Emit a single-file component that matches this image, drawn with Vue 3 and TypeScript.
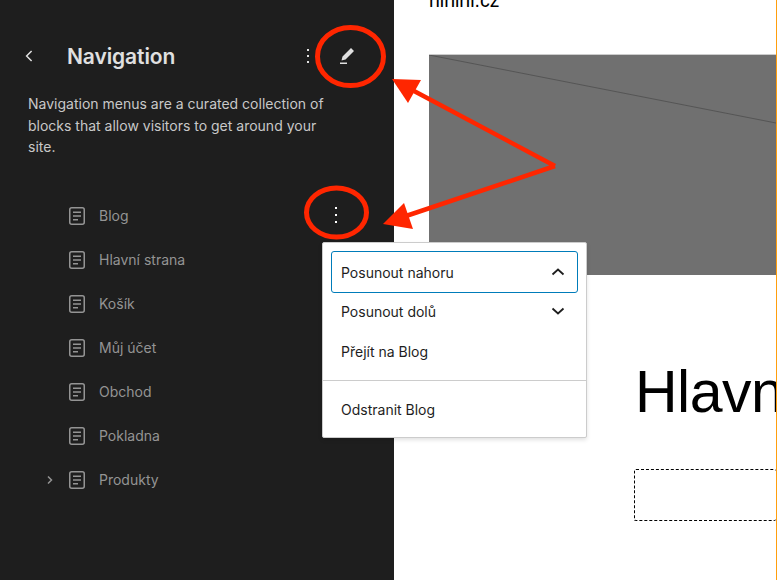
<script setup lang="ts">
const pages: { name: string; expand?: boolean; active?: boolean }[] = [
  { name: 'Blog', active: true },
  { name: 'Hlavní strana' },
  { name: 'Košík' },
  { name: 'Můj účet' },
  { name: 'Obchod' },
  { name: 'Pokladna' },
  { name: 'Produkty', expand: true },
]
</script>

<template>
  <div class="page">
    <aside class="sidebar">
      <header class="head">
        <svg class="back" width="24" height="24" viewBox="0 0 24 24"><path d="M14.600 7l-5 5 5 5" fill="none" stroke="#e0e0e0" stroke-width="1.500"/></svg>
        <h1>Navigation</h1>
        <svg class="dots" width="24" height="24" viewBox="0 0 24 24" fill="#e0e0e0"><rect x="11" y="5" width="2" height="2"/><rect x="11" y="11" width="2" height="2"/><rect x="11" y="17" width="2" height="2"/></svg>
        <svg class="pen" width="24" height="24" viewBox="0 0 24 24"><path d="m19 7-3-3-8.500 8.500-1 4 4-1L19 7Zm-7 11.500H5V20h7v-1.500Z" fill="#e0e0e0"/></svg>
      </header>
      <p class="desc">Navigation menus are a curated collection of blocks that allow visitors to get around your site.</p>
      <ul class="list">
        <li v-for="p in pages" :key="p.name" class="row">
          <span class="caret">
            <svg v-if="p.expand" width="16" height="16" viewBox="0 0 16 16"><path d="M6 4.500 9.500 8 6 11.500" fill="none" stroke="#949494" stroke-width="1.500"/></svg>
          </span>
          <svg class="doc" width="24" height="24" viewBox="0 0 24 24" fill="none" stroke="#949494"><rect x="4.750" y="3.750" width="14.500" height="16.500" rx="2" stroke-width="1.500"/><path d="M8 8.250h8M8 12h8M8 15.750h5" stroke-width="1.500"/></svg>
          <span class="label">{{ p.name }}</span>
          <svg v-if="p.active" class="row-dots" width="24" height="24" viewBox="0 0 24 24" fill="#fff"><rect x="11" y="4" width="2" height="2"/><rect x="11" y="11" width="2" height="2"/><rect x="11" y="18" width="2" height="2"/></svg>
        </li>
      </ul>
    </aside>

    <main class="canvas">
      <div class="site">hlhlhl.cz</div>
      <div class="placeholder">
        <svg class="diag" viewBox="0 0 347 220" preserveAspectRatio="none"><path d="M0 0 347 68" stroke="#555" stroke-width="1" fill="none"/></svg>
      </div>
      <h2 class="title">Hlavní strana</h2>
      <div class="dashed"></div>
    </main>

    <div class="menu">
      <div class="group">
        <div class="item focus"><span>Posunout nahoru</span>
          <svg width="24" height="24" viewBox="0 0 24 24"><path d="M6.500 14.500 12 9.500l5.500 5" fill="none" stroke="#1e1e1e" stroke-width="1.800"/></svg>
        </div>
        <div class="item"><span>Posunout dolů</span>
          <svg width="24" height="24" viewBox="0 0 24 24"><path d="M6.500 9.500 12 14.500l5.500-5" fill="none" stroke="#1e1e1e" stroke-width="1.800"/></svg>
        </div>
        <div class="item"><span>Přejít na Blog</span></div>
      </div>
      <div class="group last">
        <div class="item"><span>Odstranit Blog</span></div>
      </div>
    </div>

    <svg class="notes" width="777" height="580" viewBox="0 0 777 580">
      <ellipse cx="350.500" cy="56.500" rx="33" ry="29" fill="none" stroke="#ff2600" stroke-width="5"/>
      <ellipse cx="336.500" cy="212.500" rx="30" ry="24.500" fill="none" stroke="#ff2600" stroke-width="5"/>
      <path d="M555 166 414 91M555 166 403 217" fill="none" stroke="#ff2600" stroke-width="4.500"/>
      <path d="M392 79 421 80 408 103z" fill="#ff2600"/>
      <path d="M383 224 404 203 413 229z" fill="#ff2600"/>
    </svg>
  </div>
</template>

<style>
html, body { margin: 0; background: #fff; }
</style>

<style scoped>
.page {
  position: relative;
  width: 777px;
  height: 580px;
  display: flex;
  overflow: hidden;
  font-family: Inter, "Noto Sans", sans-serif;
  box-sizing: border-box;
  border-right: 1px solid #ff9e0d;
}
.sidebar {
  width: 394px;
  flex: none;
  background: #1e1e1e;
  box-sizing: border-box;
  padding-top: 45px;
}
.head {
  display: flex;
  align-items: center;
  height: 24px;
  padding-left: 17px;
}
.back, .dots, .pen { margin-top: -2px; }
.head h1 {
  margin: 0 0 0 26px;
  width: 229px;
  font-size: 21px;
  line-height: 24px;
  font-weight: 600;
  color: #e0e0e0;
  letter-spacing: -0.1px;
}
.pen { margin-left: 15px; }
.desc {
  margin: 24px 0 0 28px;
  width: 310px;
  font-size: 14px;
  line-height: 21.500px;
  color: #c8c8c8;
}
.list {
  list-style: none;
  margin: 36px 0 0;
  padding: 0;
}
.row {
  display: flex;
  align-items: center;
  height: 44px;
  padding-left: 42px;
  position: relative;
}
.caret { width: 16px; height: 16px; display: block; margin-right: 7px; }
.doc { flex: none; }
.label {
  margin-left: 10px;
  font-size: 14px;
  color: #949494;
}
.row-dots { position: absolute; left: 324px; top: 9px; }
.canvas {
  flex: 1;
  min-width: 0;
  position: relative;
  overflow: hidden;
}
.site {
  margin-left: 35px;
  height: 54px;
  margin-top: -9px;
  font-size: 19.500px;
  line-height: 18px;
  color: #000;
  font-family: "Liberation Sans", sans-serif;
}
.placeholder {
  margin: 9px 0 0 35px;
  height: 221px;
  background: #707070;
  border-top: 1px solid #ccc;
  box-sizing: border-box;
  position: relative;
}
.diag { display: block; width: 100%; height: 100%; }
.title {
  margin: 82px 0 0 241px;
  font-size: 59px;
  line-height: 70px;
  font-weight: 400;
  color: #000;
  white-space: nowrap;
  letter-spacing: -0.5px;
  font-family: "Liberation Sans", sans-serif;
}
.dashed {
  margin: 42px 0 0 240px;
  height: 50px;
  border: 1px dashed #000;
  border-right: none;
  border-radius: 2px;
}
.menu {
  position: absolute;
  left: 322px;
  top: 242px;
  width: 265px;
  height: 196px;
  box-sizing: border-box;
  background: #fff;
  border: 1px solid #ccc;
  border-radius: 2px;
  box-shadow: 0 2px 4px rgba(0, 0, 0, 0.12);
  color: #1e1e1e;
  font-size: 14px;
}
.group { padding: 8px; }
.group.last { border-top: 1px solid #ccc; }
.item {
  display: flex;
  align-items: center;
  justify-content: space-between;
  height: 40px;
  padding: 0 8px 0 10px;
  box-sizing: border-box;
  border-radius: 2px;
}
.group:not(.last) { height: 137px; box-sizing: border-box; }
.item.focus {
  height: 42px;
  margin-bottom: -2px;
  padding: 0 7px 0 9px;
  border: 1.500px solid #007cba;
  border-radius: 3px;
}
.notes { position: absolute; left: 0; top: 0; pointer-events: none; }
</style>
